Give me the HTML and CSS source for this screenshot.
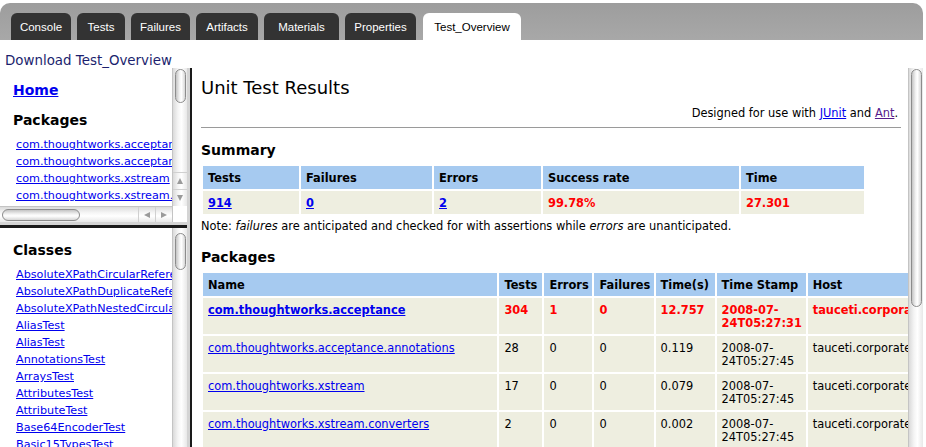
FILE: index.html
```html
<!DOCTYPE html>
<html>
<head>
<meta charset="utf-8">
<title>Test_Overview</title>
<link rel="stylesheet" href="styles.css">
</head>
<body>
<div class="tabbar">
  <div class="tab t-console">Console</div>
  <div class="tab t-tests">Tests</div>
  <div class="tab t-fail">Failures</div>
  <div class="tab t-art">Artifacts</div>
  <div class="tab t-mat">Materials</div>
  <div class="tab t-prop">Properties</div>
  <div class="tab active t-over">Test_Overview</div>
</div>
<div class="download">Download Test_Overview</div>
<div class="frames">
  <div class="left">
    <div class="top-pane">
      <div class="pane-row">
        <div class="pane-body">
          <a class="home" href="#">Home</a>
          <h2 class="side-title">Packages</h2>
          <div class="links">
            <a href="#">com.thoughtworks.acceptance</a>
            <a href="#">com.thoughtworks.acceptance.annotations</a>
            <a href="#">com.thoughtworks.xstream</a>
            <a href="#">com.thoughtworks.xstream.converters</a>
          </div>
        </div>
        <div class="vscroll">
          <div class="thumb small"></div>
          <div class="track"></div>
          <div class="arrow-box"><span class="arr up"></span></div>
          <div class="arrow-box"><span class="arr down"></span></div>
        </div>
      </div>
      <div class="hrow">
        <div class="hscroll">
          <div class="hthumb"></div>
          <div class="htrack"></div>
          <div class="harrow-box"><span class="arr lft"></span></div>
          <div class="harrow-box"><span class="arr rgt"></span></div>
        </div>
        <div class="corner"></div>
      </div>
    </div>
    <div class="hsep"></div>
    <div class="bottom-pane">
      <div class="pane-body">
        <h2 class="side-title first">Classes</h2>
        <div class="links">
          <a href="#">AbsoluteXPathCircularReferenceTest</a>
          <a href="#">AbsoluteXPathDuplicateReferenceTest</a>
          <a href="#">AbsoluteXPathNestedCircularReferenceTest</a>
          <a href="#">AliasTest</a>
          <a href="#">AliasTest</a>
          <a href="#">AnnotationsTest</a>
          <a href="#">ArraysTest</a>
          <a href="#">AttributesTest</a>
          <a href="#">AttributeTest</a>
          <a href="#">Base64EncoderTest</a>
          <a href="#">Basic15TypesTest</a>
        </div>
      </div>
      <div class="vscroll">
        <div class="thumb mid"></div>
      </div>
    </div>
  </div>
  <div class="vsep"></div>
  <div class="right">
    <div class="doc">
      <h1 class="title">Unit Test Results</h1>
      <div class="designed">Designed for use with <a href="#">JUnit</a> and <a class="visited" href="#">Ant</a>.</div>
      <div class="rule"></div>
      <h2 class="sec">Summary</h2>
      <table class="details summary">
        <tr>
          <th class="s-tests">Tests</th>
          <th class="s-fail">Failures</th>
          <th class="s-err">Errors</th>
          <th class="s-rate">Success rate</th>
          <th class="s-time">Time</th>
        </tr>
        <tr>
          <td><a class="b" href="#">914</a></td>
          <td><a class="b" href="#">0</a></td>
          <td><a class="b" href="#">2</a></td>
          <td class="err">99.78%</td>
          <td class="err">27.301</td>
        </tr>
      </table>
      <div class="note">Note: <i>failures</i> are anticipated and checked for with assertions while <i>errors</i> are unanticipated.</div>
      <h2 class="sec pk">Packages</h2>
      <table class="details packages">
        <tr>
          <th class="p-name">Name</th>
          <th class="p-tests">Tests</th>
          <th class="p-err">Errors</th>
          <th class="p-fail">Failures</th>
          <th class="p-time">Time(s)</th>
          <th class="p-stamp">Time Stamp</th>
          <th class="p-host">Host</th>
        </tr>
        <tr class="err">
          <td><a class="b" href="#">com.thoughtworks.acceptance</a></td>
          <td>304</td>
          <td>1</td>
          <td>0</td>
          <td>12.757</td>
          <td>2008-07-<br>24T05:27:31</td>
          <td>tauceti.corporate</td>
        </tr>
        <tr>
          <td><a href="#">com.thoughtworks.acceptance.annotations</a></td>
          <td>28</td>
          <td>0</td>
          <td>0</td>
          <td>0.119</td>
          <td>2008-07-<br>24T05:27:45</td>
          <td>tauceti.corporate</td>
        </tr>
        <tr>
          <td><a href="#">com.thoughtworks.xstream</a></td>
          <td>17</td>
          <td>0</td>
          <td>0</td>
          <td>0.079</td>
          <td>2008-07-<br>24T05:27:45</td>
          <td>tauceti.corporate</td>
        </tr>
        <tr>
          <td><a href="#">com.thoughtworks.xstream.converters</a></td>
          <td>2</td>
          <td>0</td>
          <td>0</td>
          <td>0.002</td>
          <td>2008-07-<br>24T05:27:45</td>
          <td>tauceti.corporate</td>
        </tr>
      </table>
    </div>
    <div class="vscroll">
      <div class="thumb big"></div>
    </div>
  </div>
</div>
</body>
</html>
```
FILE: styles.css
```css
html, body {
  margin: 0;
  padding: 0;
  background: #fff;
}
body {
  width: 926px;
  height: 447px;
  overflow: hidden;
  font-family: "DejaVu Sans", Verdana, sans-serif;
  color: #000;
}

/* tab bar */
.tabbar {
  margin: 3px 3px 0 0;
  height: 37px;
  box-sizing: border-box;
  background: linear-gradient(#9d9d9d, #a8a8a8);
  border-radius: 10px 10px 0 0;
  display: flex;
  align-items: flex-end;
  gap: 6px;
  padding-left: 11px;
}
.tab {
  height: 27px;
  background: #333;
  color: #fff;
  border-radius: 6px 6px 0 0;
  font-family: "Liberation Sans", Arial, sans-serif;
  font-size: 11.5px;
  display: flex;
  align-items: center;
  justify-content: center;
}
.t-console { width: 60px; }
.t-tests { width: 48px; }
.t-fail { width: 59px; }
.t-art { width: 62px; }
.t-mat { width: 75px; }
.t-prop { width: 71px; }
.t-over { width: 98px; margin-left: 1px; }
.tab.active {
  background: #fff;
  color: #000;
}

.download {
  height: 28px;
  box-sizing: border-box;
  padding: 13px 0 0 5px;
  font-size: 13.4px;
  line-height: 16px;
  color: #1c1f6e;
}

/* frames */
.frames {
  display: flex;
  width: 923px;
  height: 379px;
}
.left {
  width: 187px;
  display: flex;
  flex-direction: column;
}
.top-pane {
  height: 154px;
  display: flex;
  flex-direction: column;
}
.pane-row {
  height: 138px;
  display: flex;
}
.pane-body {
  flex: 1;
  overflow: hidden;
  white-space: nowrap;
  padding: 13px 0 0 13px;
  min-width: 0;
}
.home {
  display: block;
  font-size: 14px;
  font-weight: bold;
  line-height: 18px;
  color: #0000ee;
}
.side-title {
  margin: 12px 0 0;
  font-size: 14px;
  font-weight: bold;
  line-height: 18px;
}
.side-title.first {
  margin-top: 0;
}
.links {
  margin-top: 7px;
  padding-left: 3px;
  display: flex;
  flex-direction: column;
}
.links a {
  font-size: 11.2px;
  line-height: 17px;
  color: #0000ee;
}
.bottom-pane {
  flex: 1;
  display: flex;
  min-height: 0;
}
.hsep {
  height: 3px;
  border-top: 3px solid #d4d4d4;
  background: #1a1a1a;
}
.vsep {
  width: 3px;
  border-right: 2px solid #1a1a1a;
  background: #d4d4d4;
}

/* scrollbars */
.vscroll {
  width: 15px;
  box-sizing: border-box;
  border-left: 1px solid #c4c4c4;
  background: linear-gradient(to right, #dadada, #f4f4f4 35%, #fff 60%, #e8e8e8);
  display: flex;
  flex-direction: column;
  align-items: center;
  padding-top: 1px;
}
.thumb {
  width: 11px;
  box-sizing: border-box;
  border: 1px solid #8c8c8c;
  border-radius: 7px;
  background: linear-gradient(to right, #c4c4c4, #f2f2f2 40%, #fff 60%, #d6d6d6);
  flex: none;
}
.thumb.small { height: 34px; }
.thumb.mid { height: 37px; margin-top: 4px; }
.thumb.big { height: 238px; }
.track { flex: 1; }
.arrow-box {
  width: 14px;
  height: 16px;
  display: flex;
  align-items: center;
  justify-content: center;
  border-top: 1px solid #d0d0d0;
  flex: none;
}
.arr {
  width: 0;
  height: 0;
  display: block;
}
.arr.up {
  border-left: 3.5px solid transparent;
  border-right: 3.5px solid transparent;
  border-bottom: 6px solid #9a9a9a;
}
.arr.down {
  border-left: 3.5px solid transparent;
  border-right: 3.5px solid transparent;
  border-top: 6px solid #9a9a9a;
}
.arr.lft {
  border-top: 3.5px solid transparent;
  border-bottom: 3.5px solid transparent;
  border-right: 6px solid #9a9a9a;
}
.arr.rgt {
  border-top: 3.5px solid transparent;
  border-bottom: 3.5px solid transparent;
  border-left: 6px solid #9a9a9a;
}
.hrow {
  height: 16px;
  display: flex;
}
.hscroll {
  flex: 1;
  display: flex;
  align-items: center;
  border-top: 1px solid #c4c4c4;
  background: linear-gradient(#dadada, #f4f4f4 35%, #fff 60%, #e8e8e8);
  padding-left: 2px;
}
.hthumb {
  width: 78px;
  height: 12px;
  box-sizing: border-box;
  border: 1px solid #8c8c8c;
  border-radius: 7px;
  background: linear-gradient(#c4c4c4, #f2f2f2 40%, #fff 60%, #d6d6d6);
}
.htrack { flex: 1; }
.harrow-box {
  width: 16px;
  height: 15px;
  display: flex;
  align-items: center;
  justify-content: center;
  border-left: 1px solid #d0d0d0;
}
.corner {
  width: 15px;
  background: #fff;
  border-left: 1px solid #c4c4c4;
  box-sizing: border-box;
}

/* right document */
.right {
  flex: 1;
  display: flex;
  min-width: 0;
}
.doc {
  flex: 1;
  min-width: 0;
  overflow: hidden;
  padding: 8px 7px 0 9px;
  font-size: 11.4px;
}
.title {
  margin: 0;
  font-size: 18px;
  font-weight: normal;
  line-height: 24px;
}
.designed {
  margin-top: 6px;
  text-align: right;
  line-height: 14px;
  padding-right: 3px;
}
.designed a { color: #0000ee; }
.designed a.visited { color: #551a8b; }
.rule {
  margin-top: 7px;
  border-top: 1px solid #9a9a9a;
}
.sec {
  margin: 13px 0 5px;
  font-size: 14px;
  font-weight: bold;
  line-height: 18px;
}
.sec.pk { margin-top: 15px; }
.note {
  margin-top: 3px;
  line-height: 14px;
}
.details {
  border-collapse: separate;
  border-spacing: 2px;
  table-layout: fixed;
}
.details th, .details td {
  box-sizing: border-box;
  padding: 6px 5px 4px;
  font-size: 11.4px;
  line-height: 13px;
  text-align: left;
  vertical-align: top;
  white-space: nowrap;
  overflow: hidden;
}
.details th {
  background: #a6caf0;
  font-weight: bold;
}
.details td {
  background: #eeeee0;
}
.details a { color: #0000ee; }
.details a.b { font-weight: bold; }
.err, .err td {
  color: #ff0000;
  font-weight: bold;
}
.summary { width: 663px; }
.s-tests { width: 96px; }
.s-fail { width: 131px; }
.s-err { width: 107px; }
.s-rate { width: 196px; }
.s-time { width: 123px; }
.packages { width: 799px; }
.p-name { width: 294px; }
.p-tests { width: 43px; }
.p-err { width: 48px; }
.p-fail { width: 59px; }
.p-time { width: 59px; }
.p-stamp { width: 89px; }
.p-host { width: 190px; }
```
